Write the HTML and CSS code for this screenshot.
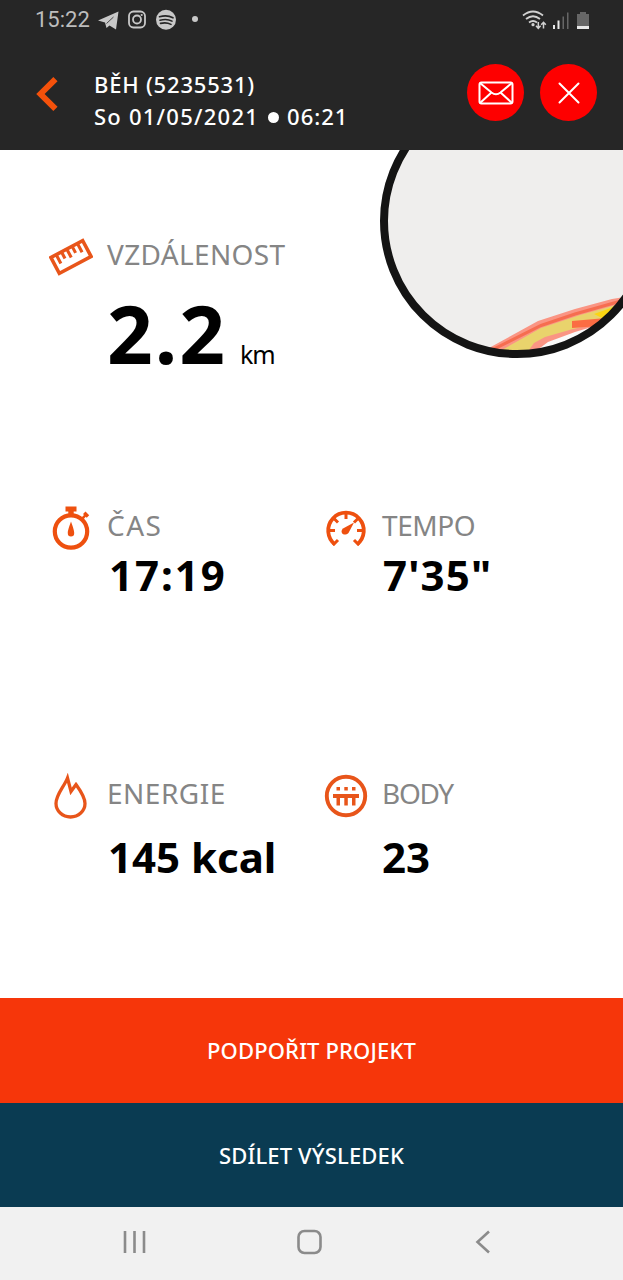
FILE: index.html
```html
<!DOCTYPE html>
<html lang="cs">
<head>
    <meta charset="utf-8">
    <title>Běh</title>
    <link rel="stylesheet" href="styles.css">
</head>
<body>
<header class="header">
    <div class="status">
        <span class="clock">15:22</span>
        <svg class="status_left" width="104" height="24" viewBox="0 0 104 24" fill="none">
            <path d="M1 12.500 21.500 3.500 19 21.500 12.500 17.500 9.500 20 8 14.500z" fill="#c8c8c8"/>
            <path d="M9.500 15.500 16.500 9" stroke="#262626" stroke-width=".8"/>
            <rect x="32" y="3.500" width="16" height="16" rx="4.500" stroke="#c8c8c8" stroke-width="1.800"/>
            <circle cx="40" cy="11.500" r="4" stroke="#c8c8c8" stroke-width="1.800"/>
            <circle cx="44.700" cy="7" r="1.100" fill="#c8c8c8"/>
            <circle cx="69" cy="11.700" r="10" fill="#c8c8c8"/>
            <path d="M62.500 8.800Q70 6.500 76 9.800M63 12.200Q70 10.300 75 13.100M63.500 15.400Q69.500 14 74 16.400" stroke="#262626" stroke-width="1.600" stroke-linecap="round"/>
            <circle cx="98" cy="11" r="3" fill="#c8c8c8"/>
        </svg>
        <svg class="status_right" width="70" height="24" viewBox="0 0 70 24" fill="none">
            <g stroke="#d0d0d0" stroke-width="1.800">
                <path d="M2 7.500Q12 -.5 22 7.500M5 11Q12 5.500 19 11M8 14.500Q12 11.500 16 14.500"/>
                <path d="M17.300 14v6M15 17.800l2.300 2.500 2.300-2.500M22.500 20.500v-6M20.200 16.800l2.300-2.500 2.300 2.500" stroke-width="1.500"/>
            </g>
            <circle cx="12" cy="16.700" r="1.600" fill="#d0d0d0"/>
            <path d="M32 17h2v4h-2zM36.500 12.500h2V21h-2z" fill="#e8e8e8"/>
            <path d="M41.500 8.500h1.500V21h-1.500zM46 4.500h1.500V21H46z" fill="#666"/>
            <path d="M56 6h3V4h6v2h3v12H56z" fill="#666"/>
            <path d="M56 18h12v3H56z" fill="#e8e8e8"/>
        </svg>
    </div>
    <div class="bar">
        <svg class="back" width="24" height="36" viewBox="0 0 24 36">
            <path d="M21.500 3 6.500 18l15 15" fill="none" stroke="#f4510b" stroke-width="6"/>
        </svg>
        <div class="title">
            <div class="title_name">BĚH (5235531)</div>
            <div class="title_date">So 01/05/2021<i class="dot"></i><span class="title_time">06:21</span></div>
        </div>
        <button class="round">
            <svg width="36" height="24" viewBox="0 0 36 24" fill="none" stroke="#fff" stroke-width="2">
                <rect x="1.500" y="1.500" width="33" height="21" rx="2"/>
                <path d="m2 2 11.500 9.500q4.500 3.500 9 0L34 2M2 22l11.500-10.500M34 22 22.500 11.500"/>
            </svg>
        </button>
        <button class="round">
            <svg width="24" height="24" viewBox="0 0 24 24" fill="none" stroke="#fff" stroke-width="2" stroke-linecap="round">
                <path d="m2.500 2.500 19 19M21.500 2.500l-19 19"/>
            </svg>
        </button>
    </div>
</header>

<main class="content">
    <svg class="map" width="243" height="212" viewBox="380 150 243 212">
        <clipPath id="round_map"><circle cx="517" cy="221" r="131"/></clipPath>
        <circle cx="517" cy="221" r="133" fill="#efeeed"/>
        <g clip-path="url(#round_map)">
            <path d="M526 352 545 340 575 328 623 318V352z" fill="#fafafa"/>
            <path d="M478 354 538 321 575 309 612 299 625 297V318L605 323 575 332 548 342 532 354z" fill="#fa9584"/>
            <path d="M493 355 541 328 580 315 623 303V318L600 323 573 329 545 337 534 343 526 354z" fill="#e9d36c"/>
            <path d="M484 354 541 325.500 575 314 621 301" fill="none" stroke="#f66d50" stroke-width="3"/>
            <path d="m594 314 28-10v10l-20 4z" fill="#fbd512"/>
            <path d="m572 321 34-3-6 8-28 2z" fill="#fb6c43"/>
        </g>
        <circle cx="517" cy="221" r="133" fill="none" stroke="#141414" stroke-width="8"/>
    </svg>

    <section class="row row_first">
        <div class="stat">
            <svg class="icon" width="44" height="46" viewBox="0 0 44 46" fill="none" stroke="#e8551a" stroke-width="3.600">
                <g transform="rotate(-28 22 23)">
                    <rect x="4" y="14" width="36" height="18"/>
                    <path d="M10 15v9M16 15v6.500M22 15v8.500M28 15v6.500M34 15v9" stroke-width="3.100"/>
                </g>
            </svg>
            <div class="stat_text">
                <div class="label label_distance">VZDÁLENOST</div>
                <div class="distance">2.2<span class="unit">km</span></div>
            </div>
        </div>
    </section>

    <section class="row row_time">
        <div class="stat">
            <svg class="icon" width="44" height="46" viewBox="0 0 44 46">
                <circle cx="22" cy="26.500" r="16.200" fill="none" stroke="#ee500f" stroke-width="4.200"/>
                <path d="M16.500 1.500h11v5h-2.800v4h-5.400v-4h-2.800z" fill="#ee500f"/>
                <path d="m31.500 13.500 3.500-3.500-1-1 2.500-2.500 3.700 3.700-2.500 2.500-1-1-3 3.500z" fill="#ee500f"/>
                <path d="M22 16.500c1 3 3.500 9 3.200 11.800a3.200 3.200 0 0 1-6.400 0C18.500 25.500 21 19.500 22 16.500z" fill="#ee500f"/>
            </svg>
            <div class="stat_text">
                <div class="label label_time">ČAS</div>
                <div class="value value_time">17:19</div>
            </div>
        </div>
        <div class="stat">
            <svg class="icon" width="44" height="46" viewBox="0 0 44 46" fill="none" stroke="#ee500f" stroke-width="3.800">
                <path d="M11 39.500A17.800 17.800 0 1 1 33 39.500"/>
                <path d="m9 40 5-5M35 40l-5-5M5 25.500h6M39 25.500h-6M22 8v6M9.500 13l4.500 4.500M34.500 13 30 17.500" stroke-width="3"/>
                <path d="M30 17.500 19 23.500c-4 4 1 8.500 5.500 4.500z" fill="#ee500f" stroke="none"/>
            </svg>
            <div class="stat_text">
                <div class="label label_pace">TEMPO</div>
                <div class="value value_pace">7'35"</div>
            </div>
        </div>
    </section>

    <section class="row row_energy">
        <div class="stat">
            <svg class="icon" width="44" height="46" viewBox="0 0 44 46" fill="none" stroke="#e8551a" stroke-width="3.300">
                <path d="M18.500 5C15 14 7 21.500 7 30.500a14.500 13.500 0 0 0 29 0C36 24 31 17 27 11.500L22 18.500z"/>
            </svg>
            <div class="stat_text">
                <div class="label label_energy">ENERGIE</div>
                <div class="value value_low value_energy">145 kcal</div>
            </div>
        </div>
        <div class="stat">
            <svg class="icon" width="44" height="46" viewBox="0 0 44 46" fill="#e8551a">
                <circle cx="22" cy="23" r="19.200" fill="none" stroke="#e8551a" stroke-width="3.900"/>
                <path d="M12.500 14H16v3.500h-3.500zM20.300 14h3.500v3.500h-3.500zM28 14h3.500v3.500H28z"/>
                <path d="M9 21h26v4h-3.500v7.500H28V25h-4.200v7.500h-3.500V25H16v7.500h-3.500V25H9z"/>
            </svg>
            <div class="stat_text">
                <div class="label label_points">BODY</div>
                <div class="value value_low">23</div>
            </div>
        </div>
    </section>
</main>

<button class="action action_support">PODPOŘIT PROJEKT</button>
<button class="action action_share">SDÍLET VÝSLEDEK</button>

<nav class="nav">
    <svg width="26" height="26" viewBox="0 0 26 26" stroke="#8b8b8b" stroke-width="2.600">
        <path d="M3 2v22M12.500 2v22M22 2v22"/>
    </svg>
    <svg width="26" height="26" viewBox="0 0 26 26" fill="none" stroke="#8b8b8b" stroke-width="2.600">
        <rect x="1.500" y="2" width="22" height="22" rx="6"/>
    </svg>
    <svg width="24" height="26" viewBox="0 0 24 26" fill="none" stroke="#8b8b8b" stroke-width="2.600">
        <path d="M17 2.500 5.500 13 17 23.500"/>
    </svg>
</nav>
</body>
</html>
```
FILE: styles.css
```css
* {
    box-sizing: border-box;
}

body {
    margin: 0;
    width: 623px;
    height: 1280px;
    display: flex;
    flex-direction: column;
    background: #fff;
    font-family: "Noto Sans", "Open Sans", sans-serif;
    overflow: hidden;
}

button {
    border: 0;
    padding: 0;
    font-family: inherit;
}

.header {
    height: 150px;
    background: #262626;
    color: #fff;
}

.status {
    height: 38px;
    padding: 1px 32px 0 35px;
    display: flex;
    align-items: center;
}

.clock {
    width: 62px;
    font: 22px/26px Roboto, sans-serif;
    color: #bdbdbd;
}

.status_right {
    margin-left: auto;
}

.bar {
    display: flex;
    align-items: flex-start;
    padding: 26px 26px 0 34px;
}

.back {
    margin-top: 12px;
}

.title {
    width: 374px;
    margin: 4px 0 0 36px;
    font-size: 22px;
    font-weight: 500;
    line-height: 32px;
    letter-spacing: 0.8px;
    white-space: nowrap;
}

.title_date {
    letter-spacing: 1.25px;
}

.title_time {
    letter-spacing: 1px;
}

.dot {
    display: inline-block;
    width: 11px;
    height: 11px;
    margin: 0 8px 0 9px;
    border-radius: 50%;
    background: #fff;
    vertical-align: 2px;
}

.round {
    display: flex;
    align-items: center;
    justify-content: center;
    width: 57px;
    height: 57px;
    margin-right: 16px;
    border-radius: 50%;
    background: #fe0000;
    flex: none;
}

.round:last-child {
    margin-right: 0;
}

.content {
    position: relative;
    height: 848px;
    padding: 84px 0 0 49px;
    flex: none;
}

.map {
    position: absolute;
    top: 0;
    right: 0;
}

.row {
    display: grid;
    grid-template-columns: 275px 1fr;
}

.row_first {
    height: 271px;
}

.row_time {
    height: 268px;
}

.stat {
    display: flex;
    align-items: flex-start;
}

.icon {
    flex: none;
    width: 44px;
    margin-right: 14px;
}

.label {
    font-size: 28px;
    line-height: 41px;
    color: #858585;
    white-space: nowrap;
}

.label_distance {
    letter-spacing: 0.35px;
}

.label_time {
    letter-spacing: 1.5px;
}

.label_pace {
    letter-spacing: -0.4px;
}

.label_energy {
    letter-spacing: 0.5px;
}

.label_points {
    letter-spacing: -1.3px;
}

.distance {
    margin-top: 8px;
    font-size: 80px;
    font-weight: 700;
    line-height: 100px;
    letter-spacing: 2px;
    color: #000;
    white-space: nowrap;
}

.unit {
    margin-left: 13px;
    font-size: 25px;
    font-weight: 400;
    letter-spacing: -1px;
}

.value {
    margin-top: 1px;
    font-size: 42px;
    font-weight: 700;
    line-height: 56px;
    color: #000;
    white-space: nowrap;
}

.value_time {
    margin-left: 2px;
    letter-spacing: 2px;
}

.value_pace {
    margin-left: 1px;
    letter-spacing: 1.2px;
}

.value_low {
    margin-top: 15px;
}

.value_energy {
    margin-left: 1px;
}

.action {
    height: 105px;
    padding-bottom: 1px;
    font-size: 22px;
    font-weight: 500;
    letter-spacing: 0.15px;
    color: #fff;
    flex: none;
}

.action_support {
    background: #f6360a;
}

.action_share {
    height: 104px;
    background: #0a3b52;
}

.nav {
    flex: 1;
    display: flex;
    align-items: center;
    justify-content: space-between;
    padding: 0 127px 3px 122px;
    background: #f1f1f1;
}
```
